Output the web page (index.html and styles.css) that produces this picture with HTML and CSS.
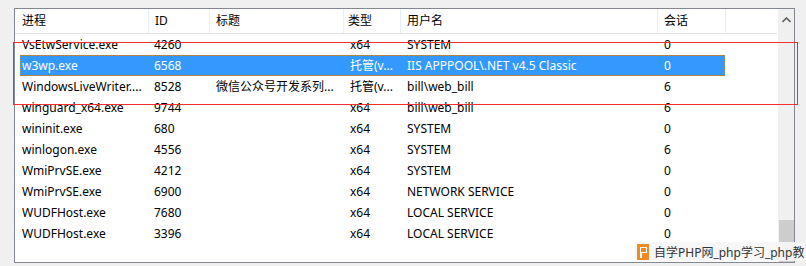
FILE: index.html
```html
<!DOCTYPE html>
<html>
<head>
<meta charset="utf-8">
<link rel="stylesheet" href="styles.css">
</head>
<body>
<div class="frame">
  <div class="list">
    <div class="head">
      <div class="hc c1">进程</div>
      <div class="hc c2">ID</div>
      <div class="hc c3">标题</div>
      <div class="hc c4">类型</div>
      <div class="hc c5">用户名</div>
      <div class="hc c6">会话</div>
      <div class="hc rest"></div>
    </div>
    <div class="rows">
      <div class="row"><div class="a">VsEtwService.exe</div><div>4260</div><div></div><div>x64</div><div>SYSTEM</div><div>0</div></div>
      <div class="row sel"><div class="a">w3wp.exe</div><div>6568</div><div></div><div>托管(v...</div><div>IIS APPPOOL\.NET v4.5 Classic</div><div>0</div></div>
      <div class="row"><div class="a">WindowsLiveWriter....</div><div>8528</div><div>微信公众号开发系列...</div><div>托管(v...</div><div>bill\web_bill</div><div>6</div></div>
      <div class="row"><div class="a">winguard_x64.exe</div><div>9744</div><div></div><div>x64</div><div>bill\web_bill</div><div>6</div></div>
      <div class="row"><div class="a">wininit.exe</div><div>680</div><div></div><div>x64</div><div>SYSTEM</div><div>0</div></div>
      <div class="row"><div class="a">winlogon.exe</div><div>4556</div><div></div><div>x64</div><div>SYSTEM</div><div>6</div></div>
      <div class="row"><div class="a">WmiPrvSE.exe</div><div>4212</div><div></div><div>x64</div><div>SYSTEM</div><div>0</div></div>
      <div class="row"><div class="a">WmiPrvSE.exe</div><div>6900</div><div></div><div>x64</div><div>NETWORK SERVICE</div><div>0</div></div>
      <div class="row"><div class="a">WUDFHost.exe</div><div>7680</div><div></div><div>x64</div><div>LOCAL SERVICE</div><div>0</div></div>
      <div class="row"><div class="a">WUDFHost.exe</div><div>3396</div><div></div><div>x64</div><div>LOCAL SERVICE</div><div>0</div></div>
    </div>
  </div>
  <div class="scroll">
    <svg class="up" width="9" height="6" viewBox="0 0 9 6"><path d="M0.5 5 L4.5 1 L8.5 5" fill="none" stroke="#606060" stroke-width="1.6"/></svg>
    <div class="thumb"></div>
  </div>
</div>
<div class="redbox"></div>
<div class="mark"><span class="logo"></span><span class="mtext">自学PHP网_php学习_php教</span></div>
</body>
</html>
```
FILE: styles.css
```css
html, body {
  margin: 0;
  padding: 0;
  background: #f0f0f0;
  width: 806px;
  height: 266px;
  overflow: hidden;
  font-family: "Noto Sans", "Noto Sans CJK SC", sans-serif;
  font-size: 12px;
  color: #000;
}
body {
  position: relative;
}
.frame {
  margin: 8px 0 0 14px;
  width: 779px;
  height: 253px;
  border: 1px solid #828790;
  background: #fff;
  display: flex;
}
.list {
  width: 762px;
  display: flex;
  flex-direction: column;
}
.head {
  display: grid;
  grid-template-columns: 134px 61px 134px 57px 257px 68px 1fr;
  height: 24px;
  border-bottom: 1px solid #e5e5e5;
}
.hc {
  border-right: 1px solid #e5effa;
  padding-left: 6px;
  line-height: 24px;
  white-space: nowrap;
}
.hc.c1 { padding-left: 7px; }
.hc.c4 { padding-left: 4px; }
.hc.rest { border-right: none; }
.rows {
  display: flex;
  flex-direction: column;
}
.row {
  display: grid;
  grid-template-columns: 128px 62px 134px 57px 257px 67px;
  width: 705px;
  margin-left: 5px;
  height: 21px;
  line-height: 21px;
  box-sizing: border-box;
  white-space: nowrap;
}
.row > div {
  padding-left: 6px;
  overflow: hidden;
}
.row > div.a {
  padding-left: 2px;
}
.row.sel {
  background: #3399ff;
  color: #fff;
  outline: 1px dotted #b4884c;
  outline-offset: -1px;
}
.scroll {
  width: 16px;
  margin-left: 1px;
  background: #f0f0f0;
  display: flex;
  flex-direction: column;
  align-items: center;
}
.up {
  margin-top: 8px;
}
.thumb {
  margin-top: auto;
  width: 15px;
  height: 42px;
  background: #cdcdcd;
}
.redbox {
  position: absolute;
  left: 13px;
  top: 42px;
  width: 783px;
  height: 61px;
  border: 1px solid #f03030;
}
.mark {
  position: absolute;
  left: 635px;
  top: 242px;
  width: 171px;
  height: 19px;
  background: rgba(246, 246, 246, 0.92);
  display: flex;
  align-items: center;
  overflow: hidden;
  white-space: nowrap;
}
.logo {
  width: 12px;
  height: 16px;
  margin-left: 2px;
  background: #f08a24;
  position: relative;
  flex: none;
}
.logo::before {
  content: "";
  position: absolute;
  left: 3px;
  top: 3px;
  width: 5px;
  height: 4px;
  border: 1.5px solid #fff;
}
.logo::after {
  content: "";
  position: absolute;
  left: 3px;
  top: 8px;
  width: 1.5px;
  height: 6px;
  background: #fff;
}
.mtext {
  margin-left: 5px;
  font-size: 12px;
  color: #333;
}
```
